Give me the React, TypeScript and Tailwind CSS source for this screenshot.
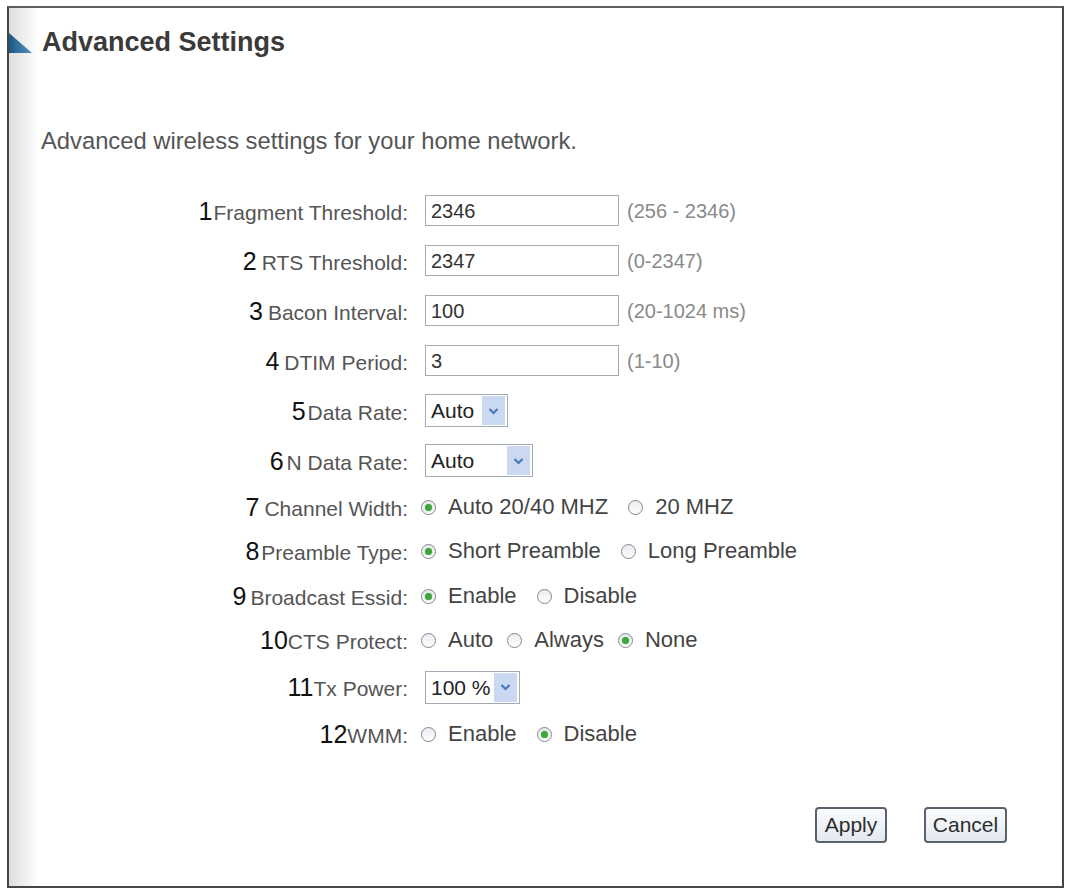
import type { ReactNode } from "react"

type Row = {
    num: string
    gap: string
    label: string
    h: string
    control: ReactNode
}

function TextField({ value, hint }: { value: string; hint: string }) {
    return (
        <div className="flex items-center ml-[7px]">
            <div className="w-[194px] h-[31px] border border-[#a3abb5] bg-white flex items-center pl-[5px] text-[20px] text-[#333] leading-none">
                {value}
            </div>
            <span className="ml-[8px] text-[20px] text-[#8a8a8a] leading-none">{hint}</span>
        </div>
    )
}

function DropDown({ value, width }: { value: string; width: string }) {
    return (
        <div className={`ml-[7px] h-[33px] border border-[#a3abb8] bg-white flex items-center justify-between pl-[5px] pr-[2px] ${width}`}>
            <span className="text-[21px] text-[#222] leading-none">{value}</span>
            <span className="w-[23px] h-[29px] bg-[#cad8f1] grid place-items-center">
                <svg width="11" height="8" viewBox="0 0 11 8">
                    <path d="M1.5 2 L5.5 6 L9.5 2" fill="none" stroke="#4a78bd" strokeWidth="2.2" />
                </svg>
            </span>
        </div>
    )
}

function Radio({ checked }: { checked?: boolean }) {
    return (
        <span className="w-[15px] h-[15px] rounded-full border border-[#7f8790] bg-[linear-gradient(#e9ebee,#ffffff)] grid place-items-center shrink-0">
            {checked && <span className="w-[7px] h-[7px] rounded-full bg-[#3ea53e] shadow-[0_0_2px_#8fd88f]" />}
        </span>
    )
}

function RadioGroup({ options, selected, gap = "gap-[20px]" }: { options: string[]; selected: number; gap?: string }) {
    return (
        <div className={`flex items-center ml-[3px] ${gap}`}>
            {options.map((o, i) => (
                <label key={o} className="flex items-center gap-[12px]">
                    <Radio checked={i === selected} />
                    <span className="text-[22px] text-[#444] leading-none">{o}</span>
                </label>
            ))}
        </div>
    )
}

const rows: Row[] = [
    { num: "1", gap: "ml-[1px]", label: "Fragment Threshold:", h: "h-[50px]", control: <TextField value="2346" hint="(256 - 2346)" /> },
    { num: "2", gap: "ml-[5px]", label: "RTS Threshold:", h: "h-[50px]", control: <TextField value="2347" hint="(0-2347)" /> },
    { num: "3", gap: "ml-[5px]", label: "Bacon Interval:", h: "h-[50px]", control: <TextField value="100" hint="(20-1024 ms)" /> },
    { num: "4", gap: "ml-[5px]", label: "DTIM Period:", h: "h-[50px]", control: <TextField value="3" hint="(1-10)" /> },
    { num: "5", gap: "ml-[2px]", label: "Data Rate:", h: "h-[50px]", control: <DropDown value="Auto" width="w-[83px]" /> },
    { num: "6", gap: "ml-[3px]", label: "N Data Rate:", h: "h-[50px]", control: <DropDown value="Auto" width="w-[108px]" /> },
    { num: "7", gap: "ml-[5px]", label: "Channel Width:", h: "h-[43px]", control: <RadioGroup options={["Auto 20/40 MHZ", "20 MHZ"]} selected={0} /> },
    { num: "8", gap: "ml-[2px]", label: "Preamble Type:", h: "h-[45px]", control: <RadioGroup options={["Short Preamble", "Long Preamble"]} selected={0} /> },
    { num: "9", gap: "ml-[4px]", label: "Broadcast Essid:", h: "h-[45px]", control: <RadioGroup options={["Enable", "Disable"]} selected={0} /> },
    { num: "10", gap: "ml-0", label: "CTS Protect:", h: "h-[43px]", control: <RadioGroup options={["Auto", "Always", "None"]} selected={2} gap="gap-[14px]" /> },
    { num: "11", gap: "ml-0", label: "Tx Power:", h: "h-[51px]", control: <DropDown value="100 %" width="w-[95px]" /> },
    { num: "12", gap: "ml-0", label: "WMM:", h: "h-[43px]", control: <RadioGroup options={["Enable", "Disable"]} selected={1} /> },
]

export default function App() {
    return (
        <div className="w-[1068px] h-[890px] bg-white pt-[6px] pl-[7px] font-['Liberation_Sans',Arial,sans-serif]">
            <div className="w-[1057px] h-[882px] border-2 border-[#474747] border-t-[#5e5e5e] bg-[linear-gradient(to_right,#dedede,#ffffff_30px)] flex flex-col">
                {/* page title */}
                <div className="flex items-center pt-[21px]">
                    <svg width="23" height="20" viewBox="0 0 23 20" className="shrink-0">
                        <defs>
                            <linearGradient id="tri" x1="0" y1="0" x2="1" y2="0">
                                <stop offset="0" stopColor="#1b5884" />
                                <stop offset="1" stopColor="#5793c2" />
                            </linearGradient>
                        </defs>
                        <path d="M0 0 L23 20 L0 20 Z" fill="url(#tri)" />
                    </svg>
                    <h1 className="ml-[10px] text-[27px] font-bold text-[#3a3a3a] leading-[27px]">Advanced Settings</h1>
                </div>

                <p className="mt-[73px] ml-[32px] text-[23.75px] text-[#555] leading-none">
                    Advanced wireless settings for your home network.
                </p>

                <div className="mt-[33px] flex flex-col">
                    {rows.map((r) => (
                        <div key={r.num} className={`flex items-center ${r.h}`}>
                            <div className="w-[399px] flex justify-end items-baseline pt-[1px]">
                                <span className="text-[25px] text-[#111] leading-none">{r.num}</span>
                                <span className={`text-[21px] text-[#555] leading-none ${r.gap}`}>{r.label}</span>
                            </div>
                            <div className="ml-[10px] flex items-center">{r.control}</div>
                        </div>
                    ))}
                </div>

                <div className="mt-[51px] flex justify-end gap-[37px] pr-[55px]">
                    <button className="w-[72px] h-[36px] rounded-[4px] border-2 border-[#59626d] bg-[linear-gradient(#fbfcfd,#e3e9f0)] text-[21px] text-[#2e2e2e] leading-none">
                        Apply
                    </button>
                    <button className="w-[83px] h-[36px] rounded-[4px] border-2 border-[#59626d] bg-[linear-gradient(#fbfcfd,#e3e9f0)] text-[21px] text-[#2e2e2e] leading-none">
                        Cancel
                    </button>
                </div>
            </div>
        </div>
    )
}
